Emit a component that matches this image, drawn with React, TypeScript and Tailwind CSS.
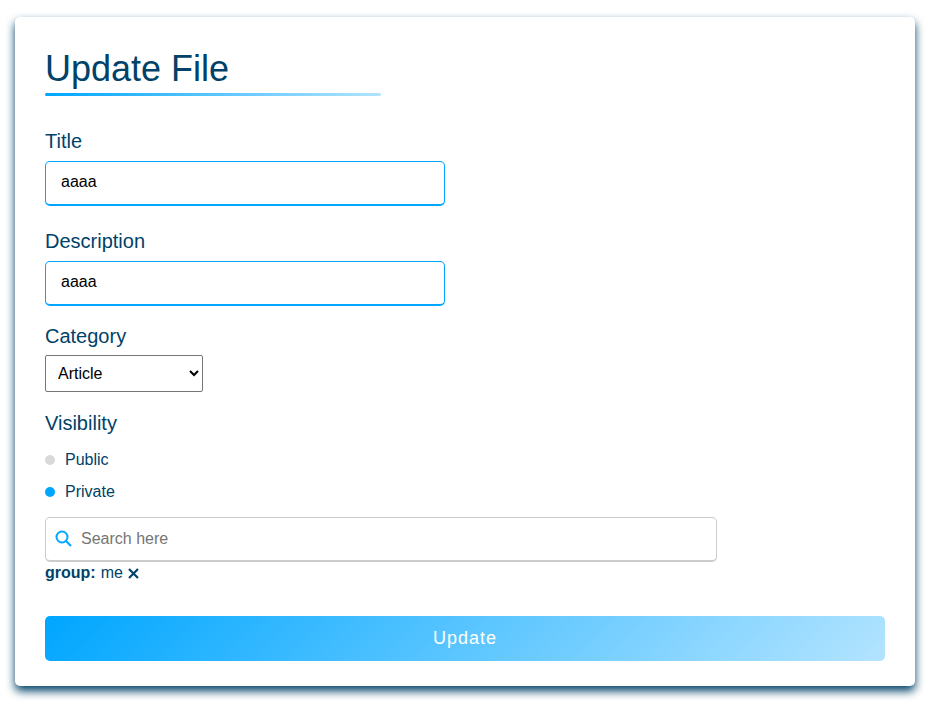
import React from "react";

function Field({ label, className }: { label: string; className: string }) {
  return (
    <div className={className}>
      <label className="block text-[20px] leading-[23px]">{label}</label>
      <input
        defaultValue="aaaa"
        className="mt-[8px] block h-[45px] w-[400px] rounded-[5px] border border-b-2 border-[#00a6ff] bg-white px-[15px] pb-[2px] text-[16px] text-black outline-none"
      />
    </div>
  );
}

function Option({ label, on }: { label: string; on?: boolean }) {
  return (
    <div className="flex h-[32px] items-center">
      <span className={on ? "size-[10px] rounded-full bg-[#00a6ff]" : "size-[10px] rounded-full bg-[#d9d9d9]"} />
      <span className="ml-[10px] text-[16px] leading-[18px]">{label}</span>
    </div>
  );
}

export default function App() {
  return (
    <div className="h-[702px] overflow-hidden bg-white px-[15px] pt-[17px] font-['Liberation_Sans',Arial,sans-serif] text-[#004268]">
      <main className="h-[669px] w-[900px] rounded-[5px] bg-white px-[30px] pt-[31px] shadow-[0_5px_10px_#004268]">
        <h1 className="text-[36px] leading-[41px]">Update File</h1>
        <div className="mt-[4px] h-[3px] w-[336px] rounded-[5px] bg-[linear-gradient(135deg,#00a6ff,#b3e4ff)]" />
        <Field label="Title" className="mt-[34px]" />
        <Field label="Description" className="mt-[24px]" />
        <label className="mt-[19px] block text-[20px] leading-[23px]">Category</label>
        <select className="mt-[7px] block h-[37px] w-[158px] rounded-[2px] border border-[#767676] bg-white px-[8px] text-[16px] text-black">
          <option>Article</option>
        </select>
        <div className="mt-[20px] text-[20px] leading-[23px]">Visibility</div>
        <div className="mt-[9px]">
          <Option label="Public" />
          <Option label="Private" on />
        </div>
        <div className="mt-[9px] flex h-[45px] w-[672px] items-center rounded-[5px] border border-b-2 border-[#ccc] pl-[9px]">
          <svg className="mb-[2px] size-[17px]" viewBox="0 0 17 17" fill="none" stroke="#00a6ff" strokeWidth="2">
            <circle cx="7" cy="7" r="5.5" />
            <path d="m11 11 5 5" />
          </svg>
          <input placeholder="Search here" className="ml-[9px] grow pb-[1px] text-[16px] outline-none placeholder:text-[#757575]" />
        </div>
        <div className="mt-[2px] flex items-center text-[16px] leading-[18px]">
          <b>group:</b>
          <span className="ml-[5px]">me</span>
          <svg className="ml-[5px] size-[11px]" viewBox="0 0 11 11" stroke="currentColor" strokeWidth="2.2">
            <path d="m1 1 9 9M10 1l-9 9" />
          </svg>
        </div>
        <button className="mt-[34px] block h-[45px] w-[840px] rounded-[5px] bg-[linear-gradient(135deg,#00a6ff,#b3e4ff)] pb-[1px] text-[18px] tracking-[1px] text-white">
          Update
        </button>
      </main>
    </div>
  );
}
